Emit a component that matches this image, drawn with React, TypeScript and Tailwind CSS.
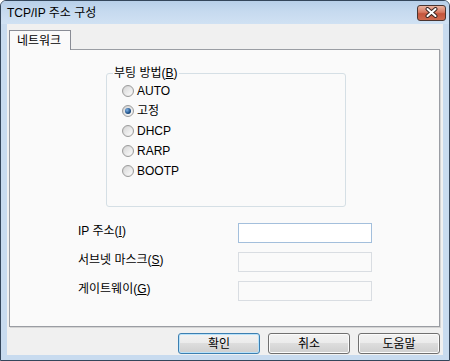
import React from "react";

const Radio = ({ checked }: { checked?: boolean }) => (
  <span className="w-[12px] h-[12px] rounded-full border border-[#9c9c9c] bg-[linear-gradient(135deg,#cfcfcf,#f6f6f6)] flex items-center justify-center shrink-0">
    <span className="w-[8px] h-[8px] rounded-full bg-[linear-gradient(135deg,#d9d9d9,#fafafa)] flex items-center justify-center">
      {checked && (
        <span className="w-[6px] h-[6px] rounded-full bg-[radial-gradient(circle_at_35%_35%,#7fb2e6,#1d4f86_60%,#0f2f55)]" />
      )}
    </span>
  </span>
);

const Btn = ({ label, def }: { label: string; def?: boolean }) => (
  <div
    className={
      "w-[82px] h-[21px] rounded-[3px] border flex items-center justify-center text-[12px] leading-none text-black bg-[linear-gradient(#f2f2f2_0%,#ebebeb_50%,#dddddd_50%,#cfcfcf_100%)] " +
      (def
        ? "border-[#3c7fb1] shadow-[inset_0_0_0_1px_#b9e2fa]"
        : "border-[#707070] shadow-[inset_0_0_0_1px_#fbfbfb]")
    }
  >
    {label}
  </div>
);

export default function App() {
  const options = ["AUTO", "고정", "DHCP", "RARP", "BOOTP"];
  const fields: { pre: string; key: string; post: string; active?: boolean }[] = [
    { pre: "IP 주소(", key: "I", post: ")", active: true },
    { pre: "서브넷 마스크(", key: "S", post: ")" },
    { pre: "게이트웨이(", key: "G", post: ")" },
  ];
  return (
    <div className="w-[450px] h-[361px] flex flex-col border border-[#34465b] rounded-t-[6px] bg-[#c8dbef] overflow-hidden font-['Liberation_Sans','Noto_Sans_CJK_KR',sans-serif] text-[12px] text-black">
      <div className="h-[23px] shrink-0 flex items-center justify-between pl-[6px] pr-[3px] bg-[linear-gradient(#b7cfe9,#c6daef_45%,#d0e1f3)]">
        <span className="leading-none">TCP/IP 주소 구성</span>
        <div className="w-[29px] h-[16px] rounded-[3px] border border-[#4a3530] bg-[linear-gradient(#eab3a0,#d87a62_45%,#c4553c_55%,#cf6a4f)] flex items-center justify-center">
          <svg width="13" height="11" viewBox="0 0 13 11">
            <path d="M2.5 2 L10.5 9 M10.5 2 L2.5 9" stroke="#3a2622" strokeWidth="4" strokeLinecap="round" />
            <path d="M2.5 2 L10.5 9 M10.5 2 L2.5 9" stroke="#ffffff" strokeWidth="2" strokeLinecap="round" />
          </svg>
        </div>
      </div>
      <div className="flex-1 mx-[6px] mb-[5px] bg-[#f0f0f0] flex flex-col pt-[6px] pl-[2px] pr-[3px]">
        <div className="flex">
          <div className="relative z-10 -mb-px w-[62px] h-[20px] border border-b-0 border-[#898c95] bg-[#fafafa] pl-[7px] flex items-center leading-none">
            네트워크
          </div>
        </div>
        <div className="h-[278px] border border-[#9a9da3] bg-[#fafafa] shadow-[1px_1px_0_#d4d4d4] flex flex-col">
          <div className="relative ml-[96px] mt-[23px] w-[240px] h-[134px] border border-[#d5dfe5] rounded-[3px] flex flex-col pt-[7px] pl-[15px]">
            <span className="absolute left-[6px] -top-[8px] px-[1px] bg-[#fafafa] leading-[14px]">
              부팅 방법(<span className="underline">B</span>)
            </span>
            {options.map((o, i) => (
              <div key={o} className="h-[20px] flex items-center gap-[3px]">
                <Radio checked={i === 1} />
                <span className="leading-none">{o}</span>
              </div>
            ))}
          </div>
          <div className="mt-[16px] pl-[68px] flex flex-col gap-[9px]">
            {fields.map((f) => (
              <div key={f.key} className="h-[20px] flex items-start">
                <span className="w-[160px] leading-[14px] pt-[1px]">
                  {f.pre}
                  <span className="underline">{f.key}</span>
                  {f.post}
                </span>
                <div
                  className={
                    "w-[134px] h-[20px] border " +
                    (f.active ? "border-[#a3bfdc] bg-white" : "border-[#d9dde2] bg-[#fafafa]")
                  }
                />
              </div>
            ))}
          </div>
        </div>
        <div className="mt-[6px] flex justify-end gap-[8px]">
          <Btn label="확인" def />
          <Btn label="취소" />
          <Btn label="도움말" />
        </div>
      </div>
    </div>
  );
}
